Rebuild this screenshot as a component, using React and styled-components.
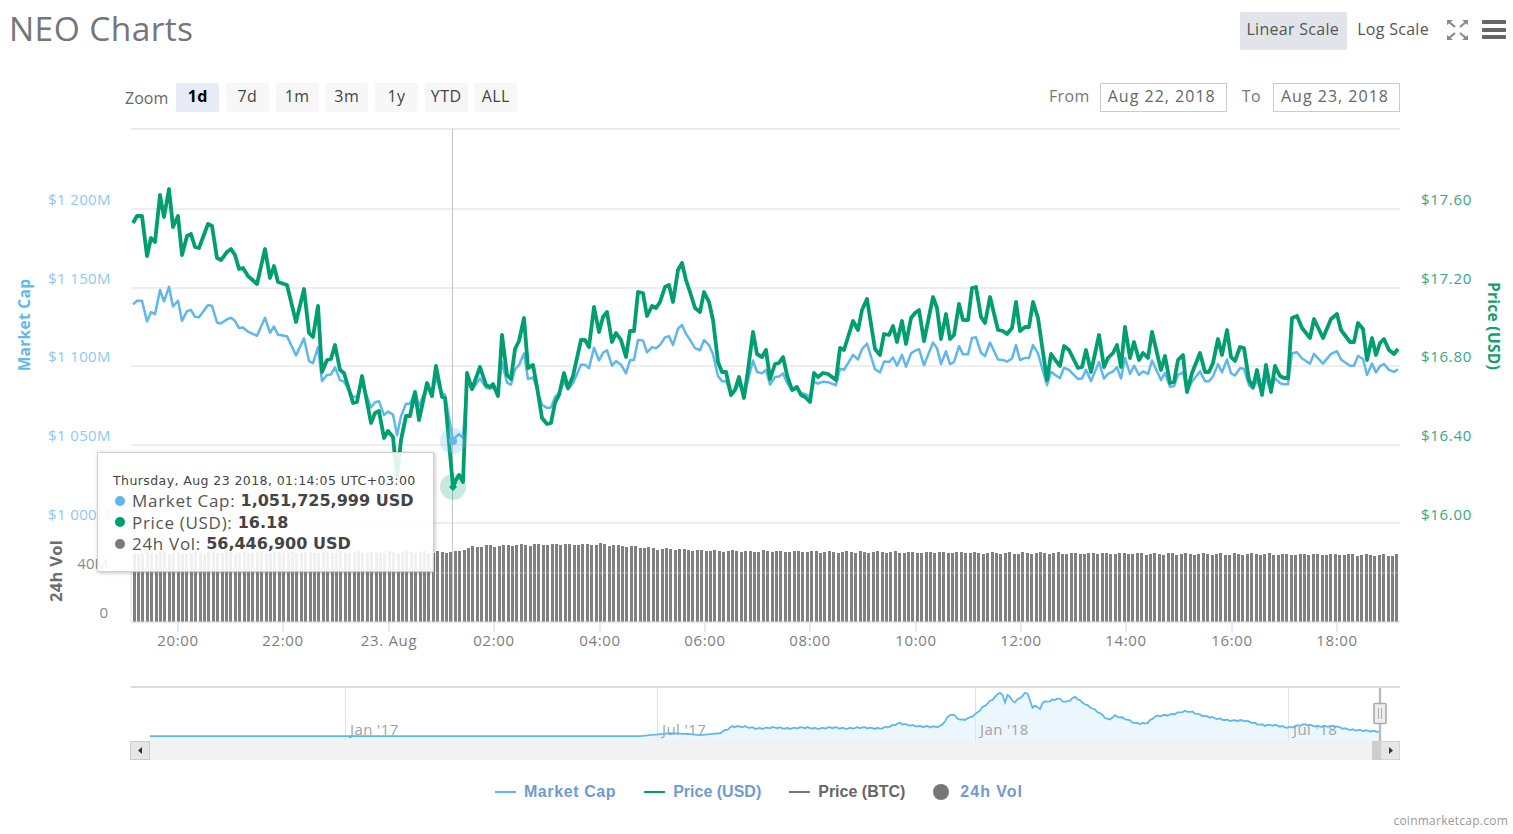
import React from "react";
import styled, { createGlobalStyle } from "styled-components";

const BLUE = "#5fb7ec";
const GREEN = "#019e70";
const GREY = "#7a7a7a";
const FONT = `"Open Sans", "DejaVu Sans", sans-serif`;

// price line, read off the chart (x, y in page pixels)
const priceLine = [
  [133, 223], [137, 216], [142, 216], [147, 256], [151, 238], [155, 242], [160, 195], [164, 217], [169, 189], [173, 227],
  [178, 216], [182, 255], [187, 236], [191, 234], [195, 247], [199, 248], [208, 224], [212, 226], [217, 258], [221, 260],
  [227, 252], [231, 249], [235, 255], [239, 269], [243, 268], [248, 276], [257, 284], [265, 249], [270, 278], [274, 266],
  [278, 282], [287, 285], [296, 322], [304, 289], [309, 333], [313, 337], [318, 306], [322, 372], [327, 360], [331, 359],
  [335, 345], [340, 370], [344, 373], [353, 403], [357, 402], [362, 376], [371, 423], [375, 413], [379, 411], [384, 438],
  [388, 431], [393, 437], [397, 477], [401, 440], [406, 416], [410, 416], [415, 392], [419, 420], [427, 383], [432, 396],
  [436, 366], [442, 397], [445, 398], [453, 487], [456, 480], [459, 475], [463, 482], [467, 373], [472, 389], [480, 367],
  [486, 385], [490, 387], [493, 384], [498, 396], [502, 335], [507, 375], [511, 379], [515, 349], [519, 341], [524, 318],
  [528, 368], [533, 365], [537, 387], [542, 418], [547, 424], [551, 423], [555, 403], [559, 395], [564, 373], [568, 388],
  [573, 376], [581, 340], [585, 340], [589, 347], [594, 307], [599, 332], [603, 317], [607, 312], [612, 342], [616, 333],
  [621, 340], [626, 357], [630, 331], [634, 331], [638, 292], [643, 293], [647, 316], [652, 306], [656, 308], [660, 302],
  [665, 287], [669, 285], [673, 302], [678, 270], [682, 263], [686, 280], [690, 292], [695, 308], [700, 312], [704, 292],
  [709, 302], [713, 320], [718, 362], [722, 372], [726, 372], [731, 395], [735, 390], [739, 377], [744, 398], [748, 370],
  [753, 332], [757, 354], [762, 357], [766, 350], [770, 379], [775, 364], [779, 363], [783, 357], [787, 375], [792, 390],
  [797, 387], [801, 395], [805, 397], [810, 402], [814, 373], [818, 377], [823, 373], [828, 374], [836, 380], [840, 348],
  [844, 350], [853, 321], [858, 330], [862, 310], [867, 299], [875, 349], [880, 355], [884, 334], [889, 335], [893, 326],
  [897, 342], [902, 321], [906, 344], [911, 318], [915, 313], [919, 310], [924, 341], [933, 297], [937, 308], [941, 339],
  [946, 314], [950, 339], [954, 335], [959, 304], [963, 320], [968, 320], [972, 288], [976, 287], [981, 317], [985, 323],
  [990, 297], [998, 330], [1003, 331], [1007, 334], [1012, 328], [1016, 302], [1020, 331], [1025, 327], [1029, 327],
  [1033, 302], [1038, 318], [1047, 380], [1051, 354], [1056, 361], [1060, 366], [1064, 346], [1069, 350], [1078, 368],
  [1082, 367], [1086, 350], [1091, 372], [1099, 335], [1104, 367], [1108, 358], [1113, 353], [1117, 345], [1121, 367],
  [1125, 327], [1130, 358], [1134, 342], [1139, 360], [1143, 353], [1148, 358], [1152, 332], [1157, 353], [1161, 370],
  [1165, 356], [1170, 383], [1174, 382], [1178, 360], [1183, 355], [1187, 392], [1192, 373], [1200, 353], [1205, 372],
  [1209, 372], [1213, 363], [1218, 339], [1222, 355], [1227, 330], [1231, 357], [1235, 361], [1240, 347], [1244, 348],
  [1249, 380], [1253, 387], [1257, 370], [1262, 395], [1266, 365], [1271, 392], [1275, 366], [1280, 376], [1284, 378],
  [1288, 378], [1292, 318], [1297, 316], [1302, 328], [1310, 338], [1314, 319], [1323, 338], [1331, 319], [1337, 314],
  [1341, 330], [1350, 342], [1354, 342], [1358, 323], [1363, 329], [1367, 360], [1372, 338], [1376, 355], [1380, 343],
  [1384, 339], [1389, 350], [1394, 354], [1398, 349],
];

// market cap follows the price almost exactly, only flatter
const capLine = priceLine.map(([x, y]) => [x, 325 + 0.515 * (y - 263)]);

const navKnots = [
  [150, 736], [640, 736], [650, 735], [670, 733], [690, 734], [700, 735], [720, 733], [732, 726], [740, 727], [757, 728],
  [880, 728], [890, 727], [900, 723], [920, 727], [941, 726], [951, 714], [956, 717], [961, 720], [968, 718], [975, 715],
  [989, 702], [1001, 691], [1005, 703], [1006, 693], [1014, 703], [1027, 691], [1033, 710], [1036, 703], [1039, 713],
  [1042, 703], [1058, 698], [1066, 703], [1075, 697], [1090, 707], [1109, 720], [1114, 715], [1135, 723], [1147, 723],
  [1155, 717], [1182, 712], [1192, 712], [1216, 719], [1244, 721], [1265, 725], [1289, 727], [1305, 725], [1337, 727],
  [1362, 731], [1380, 731],
];

const lerp = (knots, x) => {
  for (let i = 1; i < knots.length; i++) {
    if (x <= knots[i][0]) {
      const [x0, y0] = knots[i - 1];
      const [x1, y1] = knots[i];
      return y0 + ((y1 - y0) * (x - x0)) / (x1 - x0);
    }
  }
  return knots[knots.length - 1][1];
};

// the small wobble of the overview line
const navLine = [];
for (let x = 150; x <= 1380; x += 2.5) {
  const wobble = x < 720 ? 0.15 : Math.sin(x * 0.9) * 0.7 + Math.sin(x * 2.3) * 0.5;
  navLine.push([x, +(lerp(navKnots, x) + wobble).toFixed(1)]);
}

const volTop = [[133, 553], [452, 552], [460, 550], [470, 547], [480, 546], [520, 545], [600, 544], [620, 546], [660, 549], [720, 551], [1000, 553], [1400, 555]];

const bars = Array.from({ length: 288 }, (_, i) => {
  const x = Math.round(132.5 + i * 4.4);
  return { x, top: Math.round(lerp(volTop, x) + Math.sin(i * 1.7) * 0.9) };
});

const toPoints = (line) => line.map((p) => p.join(",")).join(" ");

const grid = [209, 288, 366, 445, 523];
const capLabels = [[200, "$1 200M"], [279, "$1 150M"], [357, "$1 100M"], [436, "$1 050M"], [515, "$1 000M"]];
const priceLabels = [[200, "$17.60"], [279, "$17.20"], [357, "$16.80"], [436, "$16.40"], [515, "$16.00"]];
const ticks = [[178, "20:00"], [283, "22:00"], [389, "23. Aug"], [494, "02:00"], [600, "04:00"], [705, "06:00"], [810, "08:00"], [916, "10:00"], [1021, "12:00"], [1126, "14:00"], [1232, "16:00"], [1337, "18:00"]];
const navTicks = [[345, "Jan '17"], [657, "Jul '17"], [975, "Jan '18"], [1288, "Jul '18"]];
const ranges = ["1d", "7d", "1m", "3m", "1y", "YTD", "ALL"];

const tooltipRows = [
  { color: BLUE, name: "Market Cap", value: "1,051,725,999 USD" },
  { color: GREEN, name: "Price (USD)", value: "16.18" },
  { color: GREY, name: "24h Vol", value: "56,446,900 USD" },
];

export default function App() {
  return (
    <Page>
      <GlobalStyle />
      <Header>
        <Title>NEO Charts</Title>
        <HeaderTools>
          <ScaleButton $active>Linear Scale</ScaleButton>
          <ScaleButton>Log Scale</ScaleButton>
          <ToolIcon width="21" height="20" viewBox="0 0 21 20" fill="#8a8a8a" stroke="#8a8a8a">
            <path d="M0 0h6L0 5zM21 0h-6l6 5zM0 20h6l-6-5zM21 20h-6l6-5z" stroke="none" />
            <path d="M2 2l6 5M19 2l-6 5M2 18l6-5M19 18l-6-5" strokeWidth="2.2" fill="none" />
          </ToolIcon>
          <Burger>
            <span />
            <span />
            <span />
          </Burger>
        </HeaderTools>
      </Header>

      <Toolbar>
        <RangeGroup>
          <ZoomLabel>Zoom</ZoomLabel>
          {ranges.map((r, i) => (
            <RangeButton key={r} $active={i === 0}>{r}</RangeButton>
          ))}
        </RangeGroup>
        <DateGroup>
          <DateLabel $gap={10}>From</DateLabel>
          <DateBox>Aug 22, 2018</DateBox>
          <DateLabel $gap={12}>To</DateLabel>
          <DateBox>Aug 23, 2018</DateBox>
        </DateGroup>
      </Toolbar>

      <ChartArea>
        <ChartSvg viewBox="0 125 1513 645" width="1513" height="645">
          <line x1="131" x2="1400" y1="129" y2="129" stroke="#e4e4e4" strokeWidth="1.5" />
          {grid.map((y) => (
            <line key={y} x1="131" x2="1400" y1={y} y2={y} stroke="#e8e8e8" strokeWidth="1.5" />
          ))}

          {capLabels.map(([y, t]) => (
            <AxisText key={t} x="111" y={y + 5} textAnchor="end" $color="#8ccaf2" $spacing={0.4}>{t}</AxisText>
          ))}
          {priceLabels.map(([y, t]) => (
            <AxisText key={t} x="1421" y={y + 5} $color="#35a984" $spacing={0.7}>{t}</AxisText>
          ))}
          <AxisText x="108" y="569" textAnchor="end" $color="#888">40M</AxisText>
          <AxisText x="108" y="618" textAnchor="end" $color="#888">0</AxisText>

          <AxisTitle transform="translate(30 325) rotate(-90)" $color="#62b8ec">Market Cap</AxisTitle>
          <AxisTitle transform="translate(1488 326) rotate(90)" $color="#109f73">Price (USD)</AxisTitle>
          <AxisTitle transform="translate(62 571) rotate(-90)" $color="#6e6e6e" $size={16.5}>24h Vol</AxisTitle>

          {bars.map((b, i) => (
            <VolumeBar key={i} x={b.x} y={b.top} width="3" height={622 - b.top} />
          ))}
          <line x1="131" x2="1400" y1="573" y2="573" stroke="#e8e8e8" strokeOpacity="0.28" strokeWidth="1.5" />
          <line x1="131" x2="1400" y1="622" y2="622" stroke="#ccd6eb" />
          <line x1="131" x2="131" y1="573" y2="622" stroke="#dfe6f3" />
          {ticks.map(([x, t]) => (
            <g key={t}>
              <line x1={x} x2={x} y1="622" y2="632" stroke="#ccd6eb" />
              <AxisText x={x} y="646" textAnchor="middle" $color="#7d7d7d" $spacing={0.7}>{t}</AxisText>
            </g>
          ))}

          <line x1="452.5" x2="452.5" y1="129" y2="621" stroke="#c4c4c4" />
          <polyline points={toPoints(capLine)} fill="none" stroke={BLUE} strokeWidth="2.5" strokeLinejoin="round" />
          <polyline points={toPoints(priceLine)} fill="none" stroke={GREEN} strokeWidth="3.8" strokeLinejoin="round" />
          <circle cx="453" cy="441" r="13" fill={BLUE} opacity="0.25" />
          <circle cx="453" cy="441" r="4" fill={BLUE} />
          <circle cx="453" cy="487" r="13" fill={GREEN} opacity="0.22" />
          <path d="M453 483l4 4-4 4-4-4z" fill={GREEN} />

          <line x1="131" x2="1400" y1="687" y2="687" stroke="#d2d2d2" strokeWidth="1.5" />
          <polygon points={`150,741 ${toPoints(navLine)} 1380,741`} fill="#ecf6fd" />
          {navTicks.map(([x, t]) => (
            <g key={t}>
              <line x1={x + 0.5} x2={x + 0.5} y1="688" y2="741" stroke="#e2e2e2" />
              <AxisText x={x + 5} y="735" $color="#a3a3a3" $spacing={0.4}>{t}</AxisText>
            </g>
          ))}
          <polyline points={toPoints(navLine)} fill="none" stroke={BLUE} strokeWidth="1.8" />

          <rect x="131" y="741" width="1269" height="19" fill="#f2f2f2" />
          <rect x="1372" y="741" width="9" height="19" fill="#cdcdcd" />
          <rect x="130.5" y="741.5" width="19" height="18" fill="#e6e6e6" stroke="#ccc" />
          <path d="M138 750.5l4-3.5v7z" fill="#333" />
          <rect x="1381" y="741.5" width="18.5" height="18" fill="#e6e6e6" stroke="#d4d4d4" />
          <path d="M1393 750.5l-4-3.5v7z" fill="#333" />
          <line x1="1380" x2="1380" y1="688" y2="741" stroke="#bbb" strokeWidth="2.4" />
          <rect x="1374" y="703.5" width="12" height="20" rx="1" fill="#eee" stroke="#aaa" strokeWidth="1.6" />
          <path d="M1378.5 708v11M1381.5 708v11" stroke="#aaa" />
        </ChartSvg>

        <Tooltip>
          <TooltipDate>Thursday, Aug 23 2018, 01:14:05 UTC+03:00</TooltipDate>
          {tooltipRows.map((row) => (
            <TooltipRow key={row.name}>
              <Dot $color={row.color} />
              {row.name}: <b>{row.value}</b>
            </TooltipRow>
          ))}
        </Tooltip>
      </ChartArea>

      <Legend>
        <LegendItem $color="#6f9bd1" $spacing={0.6}><LegendLine $color={BLUE} />Market Cap</LegendItem>
        <LegendItem $color="#6f9bd1"><LegendLine $color={GREEN} />Price (USD)</LegendItem>
        <LegendItem $color="#666"><LegendLine $color="#777" />Price (BTC)</LegendItem>
        <LegendItem $color="#6f9bd1" $spacing={1}><LegendDot />24h Vol</LegendItem>
      </Legend>
      <Credit>coinmarketcap.com</Credit>
    </Page>
  );
}

const GlobalStyle = createGlobalStyle`
  html, body {
    margin: 0;
    padding: 0;
    background: #fff;
    overflow: hidden;
  }
`;

const Page = styled.div`
  width: 1513px;
  height: 834px;
  font-family: ${FONT};
  color: #666;
`;

const Header = styled.header`
  display: flex;
  justify-content: space-between;
  align-items: flex-start;
  height: 83px;
  padding: 12px 7px 0 9px;
  box-sizing: border-box;
`;

const Title = styled.h1`
  margin: -7px 0 0;
  font-size: 33.5px;
  line-height: 46px;
  font-weight: 400;
  letter-spacing: 0.4px;
  color: #73767a;
`;

const HeaderTools = styled.div`
  display: flex;
  align-items: flex-start;
`;

const ScaleButton = styled.div`
  height: 38px;
  line-height: 34px;
  padding: 0 8px 0 6px;
  margin-left: 4px;
  font-size: 16px;
  letter-spacing: 0.3px;
  color: #555;
  border-radius: 2px;
  background: ${(p) => (p.$active ? "#e1e5ea" : "transparent")};
`;

const ToolIcon = styled.svg`
  margin: 8px 14px 0 10px;
`;

const Burger = styled.div`
  display: flex;
  flex-direction: column;
  gap: 3.5px;
  width: 24px;
  margin-top: 8px;

  span {
    height: 4px;
    background: #666;
    border-radius: 1px;
  }
`;

const Toolbar = styled.div`
  display: flex;
  justify-content: space-between;
  align-items: center;
  height: 29px;
  padding: 0 113px 0 125px;
  margin-bottom: 13px;
`;

const RangeGroup = styled.div`
  display: flex;
  align-items: center;
  gap: 6.7px;
`;

const ZoomLabel = styled.span`
  font-size: 16px;
  color: #666;
  width: 44.5px;
  margin-top: 1px;
`;

const RangeButton = styled.div`
  width: 43px;
  height: 29px;
  line-height: 26px;
  text-align: center;
  font-size: 16px;
  letter-spacing: 0.4px;
  border-radius: 2px;
  color: ${(p) => (p.$active ? "#000" : "#444")};
  font-weight: ${(p) => (p.$active ? 700 : 400)};
  background: ${(p) => (p.$active ? "#e6ebf5" : "#f7f7f7")};
`;

const DateGroup = styled.div`
  display: flex;
  align-items: center;
`;

const DateLabel = styled.span`
  font-size: 16px;
  letter-spacing: 0.4px;
  color: #777;
  margin: -3px ${(p) => p.$gap}px 0 15px;
`;

const DateBox = styled.div`
  width: 127px;
  height: 29px;
  box-sizing: border-box;
  border: 1.5px solid #ccc;
  padding-left: 7px;
  font-size: 16px;
  line-height: 24px;
  letter-spacing: 1px;
  white-space: nowrap;
  color: #666;
`;

const ChartArea = styled.div`
  position: relative;
  height: 645px;
`;

const ChartSvg = styled.svg`
  display: block;
`;

const VolumeBar = styled.rect`
  fill: #808080;
  shape-rendering: crispEdges;
`;

const AxisText = styled.text`
  font-family: ${FONT};
  font-size: 15px;
  letter-spacing: ${(p) => p.$spacing || 0}px;
  fill: ${(p) => p.$color};
`;

const AxisTitle = styled.text`
  font-family: ${FONT};
  font-size: ${(p) => p.$size || 15.5}px;
  font-weight: 700;
  letter-spacing: 0.3px;
  text-anchor: middle;
  fill: ${(p) => p.$color};
`;

const Tooltip = styled.div`
  position: absolute;
  left: 97px;
  top: 327px;
  width: 337px;
  height: 120px;
  box-sizing: border-box;
  padding: 19px 0 0 15px;
  background: rgba(255, 255, 255, 0.88);
  border: 1px solid #d0d0d0;
  box-shadow: 1px 1px 4px rgba(0, 0, 0, 0.25);
  font-size: 17px;
  letter-spacing: 0.7px;
  color: #555;
`;

const TooltipDate = styled.div`
  font-family: "DejaVu Sans", sans-serif;
  font-size: 12.5px;
  line-height: 18px;
  letter-spacing: 0.42px;
  white-space: nowrap;
  color: #444;
`;

const TooltipRow = styled.div`
  display: flex;
  align-items: center;
  height: 21.5px;
  white-space: pre-wrap;

  b {
    margin-left: 0;
    font-family: "DejaVu Sans", sans-serif;
    font-size: 16px;
    letter-spacing: 0;
    color: #444;
  }
`;

const Dot = styled.span`
  width: 10px;
  height: 10px;
  margin: 0 7px 0 2px;
  border-radius: 50%;
  background: ${(p) => p.$color};
`;

const Legend = styled.div`
  display: flex;
  justify-content: center;
  align-items: center;
  gap: 28px;
  height: 42px;
  padding: 2px 0 0 5px;
  box-sizing: border-box;
`;

const LegendItem = styled.div`
  display: flex;
  align-items: center;
  gap: 8px;
  font-family: "Liberation Sans", sans-serif;
  font-size: 16px;
  font-weight: 700;
  letter-spacing: ${(p) => p.$spacing || 0}px;
  color: ${(p) => p.$color};
`;

const LegendLine = styled.span`
  width: 21px;
  height: 2.5px;
  background: ${(p) => p.$color};
`;

const LegendDot = styled.span`
  width: 16px;
  height: 16px;
  margin-right: 3px;
  border-radius: 50%;
  background: #777;
`;

const Credit = styled.div`
  text-align: right;
  padding-right: 5px;
  font-size: 12px;
  letter-spacing: 0.25px;
  color: #999;
`;
